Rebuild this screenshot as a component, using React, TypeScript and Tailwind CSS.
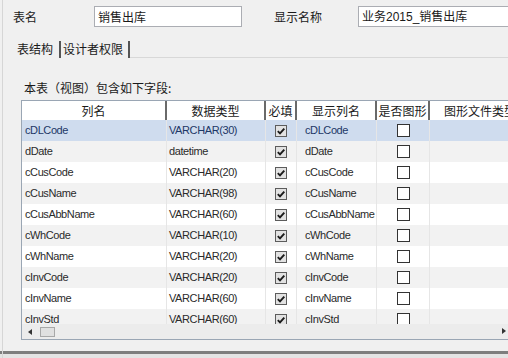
import React from 'react';

const rows = [
  ['cDLCode', 'VARCHAR(30)'],
  ['dDate', 'datetime'],
  ['cCusCode', 'VARCHAR(20)'],
  ['cCusName', 'VARCHAR(98)'],
  ['cCusAbbName', 'VARCHAR(60)'],
  ['cWhCode', 'VARCHAR(10)'],
  ['cWhName', 'VARCHAR(20)'],
  ['cInvCode', 'VARCHAR(20)'],
  ['cInvName', 'VARCHAR(60)'],
  ['cInvStd', 'VARCHAR(60)'],
];

const CheckedBox = () => (
  <div className="w-[12px] h-[12px] border border-[#5c5c5c] bg-[#e2e2e2] flex items-center justify-center">
    <svg width="10" height="10" viewBox="0 0 10 10">
      <path d="M1.8 5.2 L4 7.4 L8.3 2.6" fill="none" stroke="#1a1a1a" strokeWidth="1.9" />
    </svg>
  </div>
);

const EmptyBox = () => <div className="w-[13px] h-[13px] border border-[#333] bg-white" />;

const App = () => {
  return (
    <div className="w-[508px] h-[358px] bg-[#f0f0f0] overflow-hidden flex flex-col relative font-['Liberation_Sans','Noto_Sans_CJK_SC',sans-serif] text-[#1a1a1a]">
      {/* left frame line */}
      <div className="absolute left-[2px] top-0 bottom-0 w-px bg-[#d6d6d6]" />

      {/* Name fields */}
      <div className="flex items-center h-[21px] mt-[6px] shrink-0 text-[12px]">
        <span className="w-[94px] shrink-0 pl-[13px] font-['Noto_Sans_CJK_SC',sans-serif]">表名</span>
        <div className="w-[148px] shrink-0 h-[21px] bg-white border border-[#abadb3] flex items-center pl-[3px] font-['Noto_Sans_CJK_SC',sans-serif]">
          销售出库
        </div>
        <span className="ml-[32px] w-[84px] shrink-0 font-['Noto_Sans_CJK_SC',sans-serif]">显示名称</span>
        <div className="w-[170px] shrink-0 h-[21px] bg-white border border-[#abadb3] flex items-center pl-[3px]">
          业务2015_销售出库
        </div>
      </div>

      {/* Tabs */}
      <div className="flex items-end h-[25px] mt-[6px] shrink-0 text-[12px] font-['Noto_Sans_CJK_SC',sans-serif]">
        <div className="ml-[17px] w-[42px] shrink-0 h-[19px] flex items-center">表结构</div>
        <div className="w-[2px] shrink-0 h-[17px] bg-[#555]" />
        <div className="w-[67px] shrink-0 h-[19px] flex items-center pl-[2px]">设计者权限</div>
        <div className="w-[2px] shrink-0 h-[17px] bg-[#555]" />
        <div className="flex-1 h-px bg-[#d8d8d8]" />
      </div>

      {/* Body */}
      <div className="ml-[24px] mt-[22px] leading-[16px] text-[12px] font-['Noto_Sans_CJK_SC',sans-serif] shrink-0">
        本表（视图）包含如下字段:
      </div>

      <div className="ml-[21px] mt-[4px] w-[500px] h-[240px] border border-[#9aa6b4] bg-white flex flex-col shrink-0 overflow-hidden">
        {/* Header */}
        <div className="flex h-[19px] shrink-0 bg-white text-[12px] font-['Noto_Sans_CJK_SC',sans-serif]">
          <div className="w-[145px] shrink-0 border-r-2 border-[#6a6a6a] flex items-center justify-center">列名</div>
          <div className="w-[99px] shrink-0 border-r-2 border-[#6a6a6a] flex items-center justify-center">数据类型</div>
          <div className="w-[31px] shrink-0 border-r-2 border-[#6a6a6a] flex items-center justify-center">必填</div>
          <div className="w-[80px] shrink-0 border-r-2 border-[#6a6a6a] flex items-center justify-center">显示列名</div>
          <div className="w-[53px] shrink-0 border-r-2 border-[#6a6a6a] flex items-center justify-center">是否图形</div>
          <div className="w-[100px] shrink-0 flex items-center justify-center">图形文件类型</div>
        </div>

        {/* Rows */}
        <div className="h-[204px] overflow-hidden shrink-0">
          {rows.map(([name, type], i) => (
            <div
              key={name}
              className={`flex h-[21px] items-center text-[11px] tracking-[-0.4px] ${
                i === 0 ? 'bg-[#cfdcee] text-[#1d3766]' : i % 2 === 1 ? 'bg-[#f2f2f2] text-[#2a2a2a]' : 'bg-white text-[#2a2a2a]'
              }`}
            >
              <div className="w-[145px] shrink-0 pl-[3px] h-full flex items-center border-r border-[#e6e6e6]">{name}</div>
              <div className="w-[99px] shrink-0 pl-[2px] h-full flex items-center border-r border-[#e6e6e6]">{type}</div>
              <div className="w-[31px] shrink-0 h-full flex items-center justify-center border-r border-[#e6e6e6]">
                <CheckedBox />
              </div>
              <div className="w-[80px] shrink-0 pl-[8px] h-full flex items-center border-r border-[#e6e6e6]">{name}</div>
              <div className="w-[53px] shrink-0 h-full flex items-center justify-center border-r border-[#e6e6e6]">
                <EmptyBox />
              </div>
              <div className="w-[100px] h-full shrink-0" />
            </div>
          ))}
        </div>

        {/* Horizontal scrollbar */}
        <div className="h-[15px] shrink-0 bg-[#ececec] flex items-center relative">
          <svg width="4" height="6" viewBox="0 0 4 6" className="ml-[6px]">
            <path d="M4 0 L0 3 L4 6 Z" fill="#333" />
          </svg>
          <div className="ml-[8px] w-[15px] h-[10px] bg-[#e0e0e0] border border-[#a8a8a8]" />
          <svg width="4" height="6" viewBox="0 0 4 6" className="absolute left-[480px] top-[4px]">
            <path d="M0 0 L4 3 L0 6 Z" fill="#333" />
          </svg>
        </div>
      </div>

      <div className="mt-[11px] h-[3px] bg-[#7e7e7e] shrink-0" />
      <div className="flex-1 bg-[#e4e4e4]" />
    </div>
  );
};

export default App;
